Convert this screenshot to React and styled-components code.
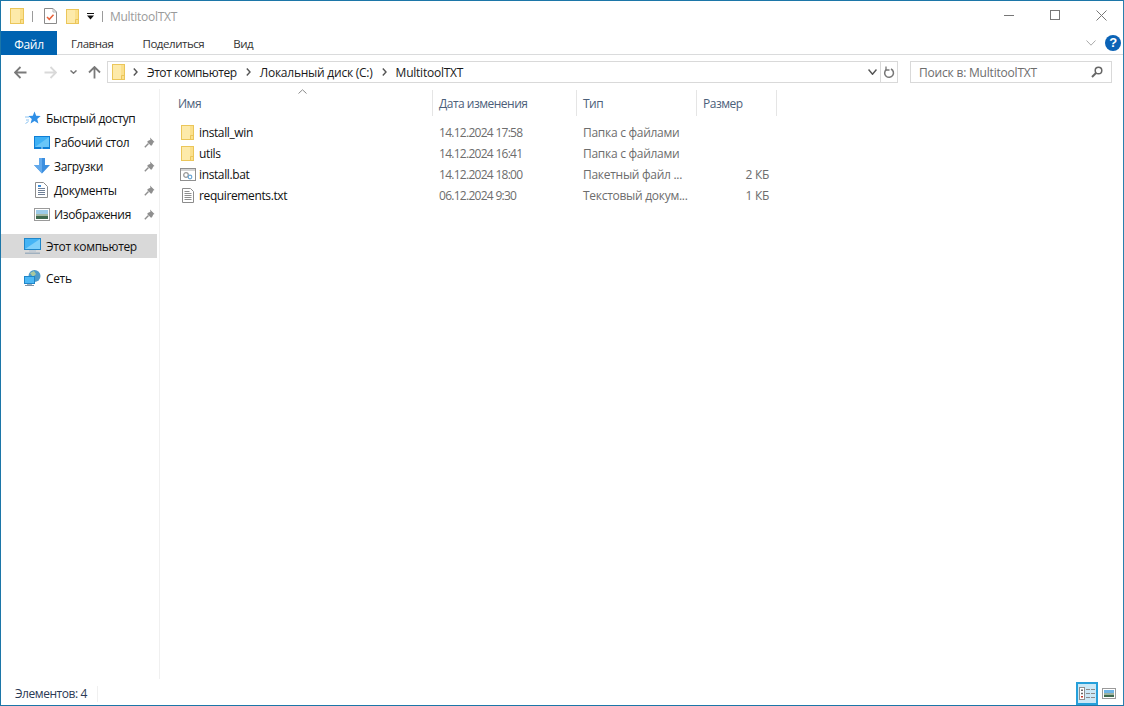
import React from 'react';
import styled, { createGlobalStyle } from 'styled-components';

const GlobalStyle = createGlobalStyle`
  html, body, #root { margin: 0; height: 100%; }
  body {
    background: #fff;
    font-family: "Open Sans", "Noto Sans", "Liberation Sans", sans-serif;
    font-size: 12px;
    letter-spacing: -0.28px;
    overflow: hidden;
  }
  * { box-sizing: border-box; }
`;

const Window = styled.div`
  width: 1124px;
  height: 706px;
  display: flex;
  flex-direction: column;
  border: 1px solid #1c76a8;
  border-right-color: #2a7fae;
  background: #fff;
  color: #111;
`;

const TitleBar = styled.div`
  height: 30px;
  flex: none;
  display: flex;
  align-items: center;
  padding-left: 9px;
`;

const QuickTools = styled.div`
  display: flex;
  align-items: center;
`;

const ToolGap = styled.span`
  width: ${(p) => p.$w}px;
  flex: none;
`;

const ToolDivider = styled.span`
  width: 1px;
  height: 11px;
  background: #9b9b9b;
  margin: 0 ${(p) => p.$right ?? 11}px 0 ${(p) => p.$left ?? 8}px;
`;

const WindowTitle = styled.span`
  color: #9a9a9a;
  margin-right: auto;
`;

const WindowButtons = styled.div`
  display: flex;
  align-items: center;
  margin: -2px -1px 0 0;
`;

const WindowButton = styled.span`
  width: 46px;
  height: 28px;
  display: flex;
  align-items: center;
  justify-content: center;
`;

const TabRow = styled.div`
  height: 24px;
  flex: none;
  display: flex;
  align-items: stretch;
  border-bottom: 1px solid #dadbdc;
  padding-right: 2px;
`;

const FileTab = styled.div`
  width: 56px;
  background: #0063b1;
  color: #fff;
  display: flex;
  align-items: center;
  justify-content: center;
  padding-top: 2px;
  margin-bottom: -1px;
`;

const Tab = styled.div`
  display: flex;
  align-items: center;
  margin-left: ${(p) => p.$gap}px;
  padding-top: 2px;
  color: #333;
  font-size: 11.5px;
  letter-spacing: -0.45px;
`;

const TabSpacer = styled.div`
  flex: 1;
`;

const RibbonExtras = styled.div`
  display: flex;
  align-items: center;
  gap: 9px;
`;

const HelpBadge = styled.span`
  width: 16px;
  height: 16px;
  border-radius: 50%;
  background: #0b63b6;
  color: #fff;
  font: bold 13px/16px "Liberation Sans", sans-serif;
  text-align: center;
`;

const AddressRow = styled.div`
  height: 34px;
  flex: none;
  display: flex;
  align-items: center;
  padding-right: 11px;
`;

const NavButtons = styled.div`
  width: 106px;
  height: 22px;
  flex: none;
  display: flex;
  align-items: center;
  padding-left: 13px;
`;

const ArrowIcon = styled.svg`
  transform: rotate(${(p) => p.$rot}deg);
`;

const AddressBox = styled.div`
  width: 791px;
  height: 22px;
  flex: none;
  display: flex;
  align-items: center;
  border: 1px solid #d9d9d9;
  padding-left: 4px;
`;

const Crumb = styled.span`
  color: #1a1a1a;
  margin: 0 9px;
  letter-spacing: ${(p) => (p.$tight ? '-0.42px' : '-0.24px')};
`;

const AddressEnd = styled.div`
  margin-left: auto;
  display: flex;
  align-items: center;
  height: 100%;
`;

const RefreshCell = styled.span`
  width: 17px;
  height: 100%;
  display: flex;
  align-items: center;
  justify-content: center;
  border-left: 1px solid #d9d9d9;
  margin-left: 3px;
`;

const SearchBox = styled.div`
  margin-left: 12px;
  flex: 1;
  height: 22px;
  display: flex;
  align-items: center;
  justify-content: space-between;
  border: 1px solid #d9d9d9;
  padding: 0 8px;
  color: #6d6d6d;
  letter-spacing: -0.2px;
`;

const Body = styled.div`
  flex: 1;
  min-height: 0;
  display: flex;
`;

const Sidebar = styled.nav`
  width: 159px;
  flex: none;
  padding-top: 17px;
  border-right: 1px solid #f0f0f0;
  margin-bottom: 3px;
  letter-spacing: -0.34px;
`;

const NavGroup = styled.div`
  margin-bottom: 8px;
`;

const NavRow = styled.div`
  height: 24px;
  width: 156px;
  display: flex;
  align-items: center;
  padding-left: ${(p) => (p.$child ? 32 : 23)}px;
  background: ${(p) => (p.$selected ? '#d9d9d9' : 'transparent')};
  color: #111;
`;

const NavIcon = styled.span`
  width: 17px;
  height: 17px;
  flex: none;
  display: flex;
  align-items: center;
  justify-content: center;
  margin-right: ${(p) => (p.$child ? 4 : 5)}px;
`;

const NavPin = styled.span`
  margin-left: auto;
  margin-right: 2px;
  display: flex;
`;

const FileArea = styled.main`
  flex: 1;
  min-width: 0;
  position: relative;
`;

const SortCaret = styled.svg`
  position: absolute;
  left: 138px;
  top: 0;
`;

const HeaderRow = styled.div`
  display: grid;
  grid-template-columns: 273px 144px 120px 80px;
  height: 26px;
  margin-top: 1px;
`;

const HeaderCell = styled.div`
  display: flex;
  align-items: center;
  padding-left: ${(p) => p.$pad ?? 6}px;
  border-right: 1px solid #e5e5e5;
  color: #4c607a;
  letter-spacing: -0.5px;
`;

const FileList = styled.div`
  margin-top: 6px;
`;

const FileRow = styled.div`
  display: grid;
  grid-template-columns: 273px 144px 119px 73px;
  height: 21px;
  align-items: center;
`;

const NameCell = styled.div`
  display: flex;
  align-items: center;
  padding-left: 19px;
  color: #111;
  letter-spacing: -0.38px;
`;

const FileIcon = styled.span`
  width: 17px;
  height: 16px;
  display: flex;
  align-items: center;
  justify-content: center;
  margin-right: 3px;
`;

const MetaCell = styled.div`
  padding-left: 6px;
  color: #6d6d6d;
  white-space: nowrap;
  text-align: ${(p) => (p.$end ? 'right' : 'left')};
  letter-spacing: ${(p) => (p.$digits ? '-0.72px' : '-0.28px')};
`;

const StatusBar = styled.footer`
  height: 23px;
  flex: none;
  display: flex;
  align-items: center;
  padding-left: 14px;
  color: #2b3a55;
  letter-spacing: -0.45px;
`;

const StatusCount = styled.span`
  width: 83px;
  height: 16px;
  line-height: 16px;
  border-right: 1px solid #f0f0f0;
`;

const ViewButtons = styled.div`
  margin-left: auto;
  display: flex;
  align-items: center;
  height: 100%;
  padding-right: 3px;
`;

const ViewButton = styled.span`
  width: 22px;
  height: 100%;
  display: flex;
  align-items: center;
  justify-content: center;
  border: 2px solid ${(p) => (p.$active ? '#26a0da' : 'transparent')};
  background: ${(p) => (p.$active ? '#cbe8f6' : 'transparent')};
`;

const Folder = ({ size = 14, h = 16 }) => (
  <svg width={size} height={h} viewBox={`0 0 ${size} ${h}`}>
    <rect x="0.5" y="0.5" width={size - 1} height={h - 1} fill="#fbe08c" stroke="#ebc65a" />
    <rect x="1" y="1" width={size - 5} height={h - 2} fill="#fdeaaa" />
    <path d={`M${size - 3.5} ${h - 0.5}v-4h3`} fill="none" stroke="#ebc65a" />
  </svg>
);

const TaskDoc = () => (
  <svg width="13" height="16" viewBox="0 0 13 16">
    <path d="M.5.5h8.500l3.500 3.500v11.500H.5z" fill="#fff" stroke="#8a8a8a" />
    <path d="M9 .5v3.500h3.500" fill="none" stroke="#b5b5b5" />
    <path d="M3 9l2.300 2.300 4.200-4.600" fill="none" stroke="#e8623a" strokeWidth="1.500" />
  </svg>
);

const DropArrow = () => (
  <svg width="7" height="7" viewBox="0 0 7 7">
    <path d="M0 .5h7" stroke="#111" />
    <path d="M0 2.500h7L3.500 6.500z" fill="#111" />
  </svg>
);

const Arrow = ({ dir, color = '#7a7a7a' }) => {
  const rot = { left: 0, right: 180, up: 90 }[dir];
  return (
    <ArrowIcon width="13" height="13" viewBox="0 0 13 13" $rot={rot}>
      <path d="M1 6.500h11.500M6.500 1L1 6.500 6.500 12" fill="none" stroke={color} strokeWidth="1.800" />
    </ArrowIcon>
  );
};

const Chevron = ({ w = 8, h = 5, color = '#777', sw = 1.5 }) => (
  <svg width={w} height={h} viewBox={`0 0 ${w} ${h}`}>
    <path d={`M.5 .5L${w / 2} ${h - 0.8} ${w - 0.5} .5`} fill="none" stroke={color} strokeWidth={sw} />
  </svg>
);

const CrumbSep = () => (
  <svg width="5" height="8" viewBox="0 0 5 8">
    <path d="M.8.5L4 4 .8 7.500" fill="none" stroke="#555" strokeWidth="1.400" />
  </svg>
);

const Refresh = () => (
  <svg width="12" height="13" viewBox="0 0 12 13">
    <path d="M3.200 3.600A4.400 4.400 0 1 0 8 3" fill="none" stroke="#777" strokeWidth="1.500" />
    <path d="M3 .5v3.500h3.500" fill="none" stroke="#777" strokeWidth="1.300" />
  </svg>
);

const SearchIcon = () => (
  <svg width="12" height="12" viewBox="0 0 12 12">
    <circle cx="7.500" cy="4.500" r="3.300" fill="none" stroke="#666" strokeWidth="1.500" />
    <path d="M5 7L1 11" stroke="#666" strokeWidth="2" />
  </svg>
);

const Star = () => (
  <svg width="16" height="15" viewBox="0 0 16 15">
    <path d="M9.500.5l1.700 4.300 4.500.3-3.500 2.900 1.200 4.500-3.900-2.500-3.900 2.500 1.200-4.500-3.500-2.900 4.500-.3z" fill="#2f8fe6" />
    <path d="M0 6h4M1 9h3M.5 12.500l3-2" stroke="#8cc4f2" strokeWidth="1" />
  </svg>
);

const Desktop = () => (
  <svg width="16" height="13" viewBox="0 0 16 13">
    <rect width="16" height="13" fill="#0f7fd6" />
    <rect x="1" y="1" width="14" height="10" fill="#3fb1f5" />
    <path d="M1 11L15 1v10z" fill="#69c6f8" />
    <rect x="7" y="11.500" width="2" height="1" fill="#bfe4fa" />
  </svg>
);

const Downloads = () => (
  <svg width="16" height="16" viewBox="0 0 16 16">
    <path d="M5 0h6v7h5l-8 8.500L0 7h5z" fill="#3c8fe0" />
    <path d="M5 0h3v15.500L0 7h5z" fill="#62a9ec" />
  </svg>
);

const Documents = () => (
  <svg width="13" height="16" viewBox="0 0 13 16">
    <path d="M.5.5h8l4 4v11H.5z" fill="#fff" stroke="#8c8c8c" />
    <path d="M3 6.500h7M3 8.500h7M3 10.500h7M3 12.500h7" stroke="#6f7f96" />
    <path d="M3 3h3v2H3z" fill="#3f8fdc" />
  </svg>
);

const Pictures = () => (
  <svg width="16" height="13" viewBox="0 0 16 13">
    <rect x=".5" y=".5" width="15" height="12" fill="#fff" stroke="#9a9a9a" />
    <rect x="2" y="2" width="12" height="4" fill="#9ccbe8" />
    <rect x="2" y="6" width="12" height="2" fill="#a3b8a3" />
    <rect x="2" y="8" width="12" height="3" fill="#3f6a4f" />
  </svg>
);

const Computer = () => (
  <svg width="17" height="17" viewBox="0 0 17 17">
    <rect x=".5" y=".5" width="16" height="11" fill="#45b4f5" stroke="#1f86c9" />
    <path d="M1 11L16 1v10z" fill="#7fd0fa" />
    <rect x="5" y="12" width="7" height="2" fill="#c4ccd4" />
    <rect x="1" y="14.500" width="15" height="1.500" fill="#9fb0bf" />
  </svg>
);

const Network = () => (
  <svg width="17" height="17" viewBox="0 0 17 17">
    <circle cx="10.500" cy="6" r="6" fill="#4d9ac9" />
    <path d="M6 3l4-2 2 3-3 3z" fill="#a9c9a0" />
    <rect x=".5" y="6.500" width="10" height="7" fill="#4db8f5" stroke="#1f86c9" />
    <rect x="3" y="14" width="5" height="1" fill="#9fb0bf" />
    <rect x="1" y="15" width="9" height="1" fill="#7d93a8" />
  </svg>
);

const Pin = () => (
  <svg width="11" height="11" viewBox="0 0 11 11">
    <path d="M6 .5l4.500 4.500-1.200.6-1.300 2.600-1 .6L3.200 5l.6-1 2.600-1.300z" fill="#8f8f8f" />
    <path d="M4.500 6.500L.8 10.300" stroke="#8f8f8f" strokeWidth="1.400" />
  </svg>
);

const BatFile = () => (
  <svg width="16" height="13" viewBox="0 0 16 13">
    <rect x=".5" y=".5" width="15" height="12" fill="#fff" stroke="#8f8f8f" />
    <rect x="1" y="1" width="14" height="2" fill="#d4d4d4" />
    <circle cx="6" cy="7" r="2.300" fill="none" stroke="#9a9a9a" strokeWidth="1.300" />
    <circle cx="10" cy="9" r="1.800" fill="none" stroke="#6da8d6" strokeWidth="1.200" />
  </svg>
);

const TextFile = () => (
  <svg width="12" height="15" viewBox="0 0 12 15">
    <path d="M.5.5h8l3 3v11H.5z" fill="#fff" stroke="#8c8c8c" />
    <path d="M2.500 3.500h5M2.500 5.500h7M2.500 7.500h7M2.500 9.500h7M2.500 11.500h7" stroke="#8f8f8f" />
  </svg>
);

const DetailsView = () => (
  <svg width="16" height="13" viewBox="0 0 16 13">
    <rect x=".5" y=".5" width="5" height="12" fill="#fff" stroke="#8f8f8f" />
    <path d="M2 2.500h2V4H2zM2 5.800h2v1.500H2z" fill="#6a6a6a" />
    <path d="M2 9h2v1.500H2z" fill="#c0392b" />
    <path d="M7 2.500h4M12 2.500h4M7 6.500h4M12 6.500h4M7 10.500h4M12 10.500h4" stroke="#8a8a8a" />
  </svg>
);

const ThumbView = () => (
  <svg width="14" height="11" viewBox="0 0 14 11">
    <rect x=".5" y=".5" width="13" height="10" fill="#fff" stroke="#9a9a9a" />
    <rect x="2" y="2" width="10" height="3" fill="#6db4e6" />
    <rect x="2" y="5" width="10" height="2" fill="#9db3a0" />
    <rect x="2" y="7" width="10" height="2" fill="#3f6a4f" />
  </svg>
);

const files = [
  { name: 'install_win', icon: <Folder size={13} h={15} />, date: '14.12.2024 17:58', type: 'Папка с файлами', size: '' },
  { name: 'utils', icon: <Folder size={13} h={15} />, date: '14.12.2024 16:41', type: 'Папка с файлами', size: '' },
  { name: 'install.bat', icon: <BatFile />, date: '14.12.2024 18:00', type: 'Пакетный файл ...', size: '2 КБ' },
  { name: 'requirements.txt', icon: <TextFile />, date: '06.12.2024 9:30', type: 'Текстовый докум...', size: '1 КБ' },
];

const quickLinks = [
  { label: 'Рабочий стол', icon: <Desktop /> },
  { label: 'Загрузки', icon: <Downloads /> },
  { label: 'Документы', icon: <Documents /> },
  { label: 'Изображения', icon: <Pictures /> },
];

const App = () => (
  <>
    <GlobalStyle />
    <Window>
      <TitleBar>
        <QuickTools>
          <Folder size={14} h={16} />
          <ToolDivider />
          <TaskDoc />
          <ToolGap $w={9} />
          <Folder size={13} h={15} />
          <ToolGap $w={8} />
          <DropArrow />
          <ToolDivider $left={8} $right={7} />
        </QuickTools>
        <WindowTitle>MultitoolTXT</WindowTitle>
        <WindowButtons>
          <WindowButton>
            <svg width="10" height="10" viewBox="0 0 10 10">
              <path d="M0 5.500h10" stroke="#777" />
            </svg>
          </WindowButton>
          <WindowButton>
            <svg width="10" height="10" viewBox="0 0 10 10">
              <rect x=".5" y=".5" width="9" height="9" fill="none" stroke="#777" />
            </svg>
          </WindowButton>
          <WindowButton>
            <svg width="11" height="11" viewBox="0 0 11 11">
              <path d="M.5.5l10 10M10.500.5l-10 10" stroke="#777" />
            </svg>
          </WindowButton>
        </WindowButtons>
      </TitleBar>

      <TabRow>
        <FileTab>Файл</FileTab>
        <Tab $gap={14}>Главная</Tab>
        <Tab $gap={29}>Поделиться</Tab>
        <Tab $gap={29}>Вид</Tab>
        <TabSpacer />
        <RibbonExtras>
          <Chevron w={10} h={6} color="#aaa" sw={1} />
          <HelpBadge>?</HelpBadge>
        </RibbonExtras>
      </TabRow>

      <AddressRow>
        <NavButtons>
          <Arrow dir="left" />
          <ToolGap $w={17} />
          <Arrow dir="right" color="#d9d9d9" />
          <ToolGap $w={13} />
          <Chevron w={7} h={4} />
          <ToolGap $w={11} />
          <Arrow dir="up" />
        </NavButtons>
        <AddressBox>
          <Folder size={13} h={16} />
          <ToolGap $w={8} />
          <CrumbSep />
          <Crumb $tight>Этот компьютер</Crumb>
          <CrumbSep />
          <Crumb>Локальный диск (C:)</Crumb>
          <CrumbSep />
          <Crumb>MultitoolTXT</Crumb>
          <AddressEnd>
            <Chevron w={9} h={6} color="#555" sw={1.5} />
            <RefreshCell>
              <Refresh />
            </RefreshCell>
          </AddressEnd>
        </AddressBox>
        <SearchBox>
          <span>Поиск в: MultitoolTXT</span>
          <SearchIcon />
        </SearchBox>
      </AddressRow>

      <Body>
        <Sidebar>
          <NavGroup>
            <NavRow>
              <NavIcon>
                <Star />
              </NavIcon>
              Быстрый доступ
            </NavRow>
            {quickLinks.map((link) => (
              <NavRow key={link.label} $child>
                <NavIcon $child>{link.icon}</NavIcon>
                {link.label}
                <NavPin>
                  <Pin />
                </NavPin>
              </NavRow>
            ))}
          </NavGroup>
          <NavGroup>
            <NavRow $selected>
              <NavIcon>
                <Computer />
              </NavIcon>
              Этот компьютер
            </NavRow>
          </NavGroup>
          <NavGroup>
            <NavRow>
              <NavIcon>
                <Network />
              </NavIcon>
              Сеть
            </NavRow>
          </NavGroup>
        </Sidebar>

        <FileArea>
          <SortCaret width="9" height="5" viewBox="0 0 9 5">
            <path d="M.5 4.500L4.500.8l4 3.700" fill="none" stroke="#8a8a8a" />
          </SortCaret>
          <HeaderRow>
            <HeaderCell $pad={18}>Имя</HeaderCell>
            <HeaderCell>Дата изменения</HeaderCell>
            <HeaderCell>Тип</HeaderCell>
            <HeaderCell>Размер</HeaderCell>
          </HeaderRow>
          <FileList>
            {files.map((file) => (
              <FileRow key={file.name}>
                <NameCell>
                  <FileIcon>{file.icon}</FileIcon>
                  {file.name}
                </NameCell>
                <MetaCell $digits>{file.date}</MetaCell>
                <MetaCell>{file.type}</MetaCell>
                <MetaCell $end>{file.size}</MetaCell>
              </FileRow>
            ))}
          </FileList>
        </FileArea>
      </Body>

      <StatusBar>
        <StatusCount>Элементов: 4</StatusCount>
        <ViewButtons>
          <ViewButton $active>
            <DetailsView />
          </ViewButton>
          <ViewButton>
            <ThumbView />
          </ViewButton>
        </ViewButtons>
      </StatusBar>
    </Window>
  </>
);

export default App;
